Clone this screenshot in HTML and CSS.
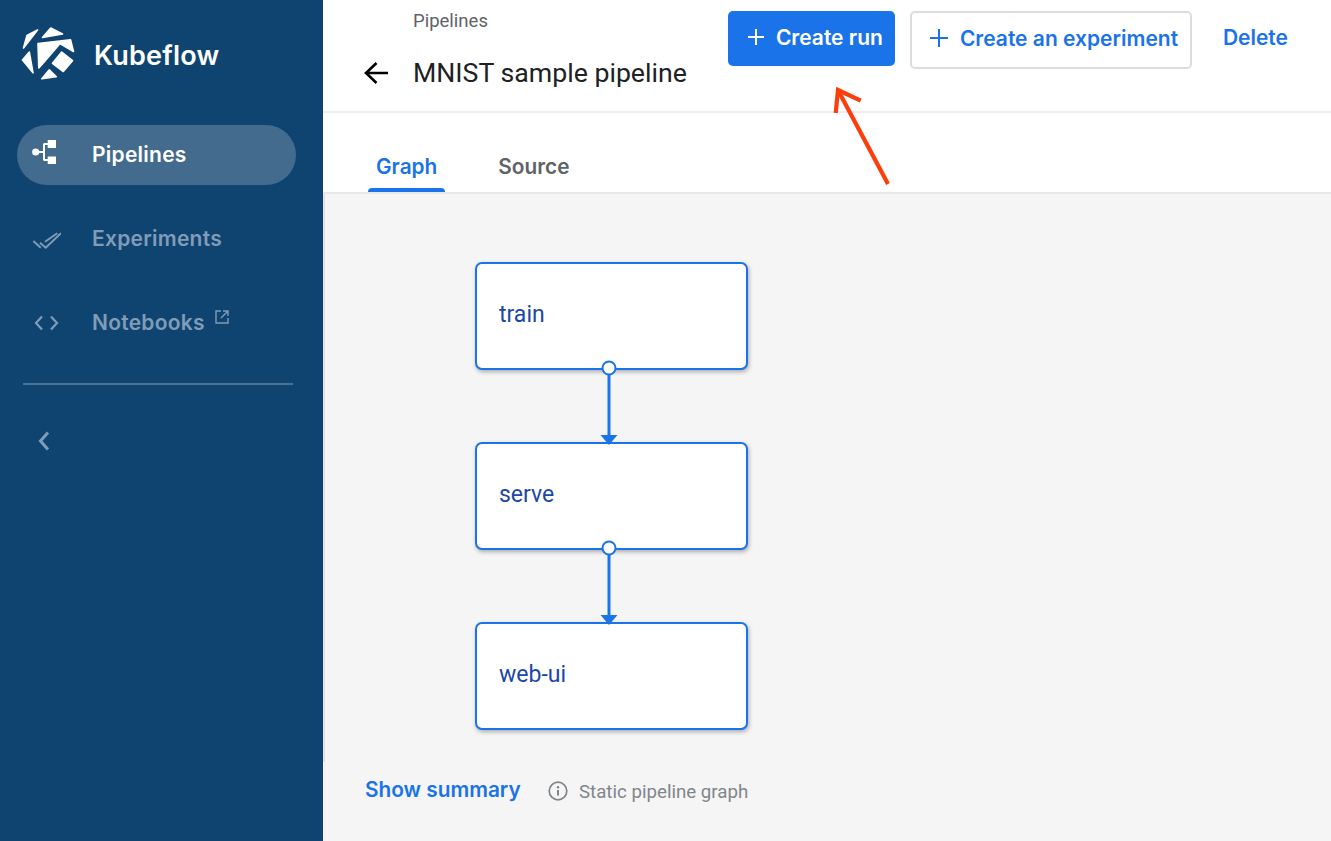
FILE: index.html
```html
<!DOCTYPE html>
<html lang="en">
<head>
<meta charset="UTF-8" />
<title>Kubeflow Pipelines</title>
<link rel="stylesheet" href="styles.css">
</head>
<body>
  <div class="app">
    <nav class="sidebar">
      <div class="brand">
        <svg class="logo" viewBox="0 0 60 60" width="60" height="60">
          <g transform="translate(-21 -24)" fill="#fff" stroke="#fff" stroke-width="1.6" stroke-linejoin="round">
            <polygon points="37.5,30 27,35.5 23.5,48 " />
            <polygon points="50.7,28 42.5,37.5 62.5,34" />
            <polygon points="38,43.5 70.5,39.8 73.5,51.5 60,43.5 45,61 38.8,68" />
            <polygon points="61.7,52 72.5,60.7 63.3,71.5 52.5,63.3" />
            <polygon points="29.3,52 33,72.8 22.5,60" />
            <polygon points="49.3,69.8 56.3,76.7 41.8,78.8" />
          </g>
        </svg>
        <span class="brand-name">Kubeflow</span>
      </div>
      <a class="nav-item active">
        <svg class="nav-icon" viewBox="0 0 32 32" width="32" height="32">
          <circle cx="6.700" cy="13" r="3.600" fill="currentColor" />
          <path d="M10 13h5M15 4.500v17" stroke="currentColor" stroke-width="2" fill="none" />
          <rect x="15" y="4" width="4" height="2" fill="currentColor" />
          <rect x="15" y="20" width="4" height="2" fill="currentColor" />
          <rect x="18.700" y="1" width="8.300" height="8" fill="currentColor" />
          <rect x="18.700" y="17.500" width="8.300" height="7.500" fill="currentColor" />
        </svg>
        <span>Pipelines</span>
      </a>
      <a class="nav-item">
        <svg class="nav-icon" viewBox="0 0 32 32" width="32" height="32">
          <path d="M4.300 18l7.400 6.700M11 19.700l5.700 5L32 10.300M16 18.700l12.300-8.400" stroke="currentColor" stroke-width="1.900" fill="none" />
        </svg>
        <span>Experiments</span>
      </a>
      <a class="nav-item">
        <svg class="nav-icon" viewBox="0 0 32 32" width="32" height="32">
          <path d="M13 9.500L7 16l6 6.500M22 9.500l6 6.500-6 6.500" stroke="currentColor" stroke-width="2.200" fill="none" />
        </svg>
        <span>Notebooks</span>
        <svg class="ext-icon" viewBox="0 0 16 16" width="16" height="16">
          <path d="M7 2H2v12h12V9M9 2h5v5M14 2L7 9" stroke="currentColor" stroke-width="1.400" fill="none" />
        </svg>
      </a>
      <div class="nav-divider"></div>
      <svg class="collapse" viewBox="0 0 16 24" width="16" height="24">
        <path d="M12 3.500L4.500 12l7.500 8.500" stroke="currentColor" stroke-width="3" fill="none" />
      </svg>
    </nav>

    <main class="content">
      <header class="topbar">
        <div class="title-block">
          <div class="crumb">Pipelines</div>
          <div class="title-row">
            <svg class="back" viewBox="0 0 24 24" width="24" height="24">
              <path d="M24 12H2M12.500 2L2 12l10.500 10" stroke="#000" stroke-width="2.600" fill="none" />
            </svg>
            <h1>MNIST sample pipeline</h1>
          </div>
        </div>
        <div class="actions">
          <button class="btn btn-primary">
            <svg viewBox="0 0 18 18" width="18" height="18"><path d="M9 1v16M1 9h16" stroke="currentColor" stroke-width="2" /></svg>
            Create run
          </button>
          <button class="btn btn-outline">
            <svg viewBox="0 0 18 18" width="18" height="18"><path d="M9 0v18M0 9h18" stroke="currentColor" stroke-width="2" /></svg>
            Create an experiment
          </button>
          <button class="btn btn-text">Delete</button>
        </div>
      </header>

      <div class="tabs">
        <div class="tab selected">Graph</div>
        <div class="tab">Source</div>
      </div>

      <section class="graph-area">
        <div class="graph">
          <div class="node">train</div>
          <svg class="edge" viewBox="0 0 20 72" width="20" height="72">
            <path d="M10 4v66" stroke="#1a73e8" stroke-width="3" />
            <path d="M1.500 65h17l-8.500 10z" fill="#1a73e8" />
            <circle cx="10" cy="-2" r="6.500" fill="#fff" stroke="#1a73e8" stroke-width="2" />
          </svg>
          <div class="node">serve</div>
          <svg class="edge" viewBox="0 0 20 72" width="20" height="72">
            <path d="M10 4v66" stroke="#1a73e8" stroke-width="3" />
            <path d="M1.500 65h17l-8.500 10z" fill="#1a73e8" />
            <circle cx="10" cy="-2" r="6.500" fill="#fff" stroke="#1a73e8" stroke-width="2" />
          </svg>
          <div class="node">web-ui</div>
        </div>
        <div class="graph-footer">
          <a class="summary-link">Show summary</a>
          <svg class="info" viewBox="0 0 20 20" width="20" height="20">
            <circle cx="10" cy="10" r="8.800" fill="none" stroke="#80868b" stroke-width="1.700" />
            <path d="M10 9v5.500" stroke="#80868b" stroke-width="2" />
            <circle cx="10" cy="6.200" r="1.200" fill="#80868b" />
          </svg>
          <span class="static-note">Static pipeline graph</span>
        </div>
      </section>
    </main>
  </div>

  <!-- red annotation drawn over the page -->
  <svg class="annotation" viewBox="0 0 60 100" width="60" height="100">
    <path d="M56 96L7 4" stroke="#fc3d0c" stroke-width="4.200" fill="none" />
    <path d="M3.700 25L6 2l22.700 10.700" stroke="#fc3d0c" stroke-width="4.200" fill="none" />
  </svg>
</body>
</html>
```

FILE: styles.css
```css
* {
  box-sizing: border-box;
}
html, body {
  height: 100%;
}
body {
  margin: 0;
  background: #fff;
  font-family: 'Inter', 'Liberation Sans', sans-serif;
  overflow: hidden;
}
.app {
  display: flex;
  height: 841px;
}

/* left nav */
.sidebar {
  width: 323px;
  flex: none;
  background: #0f4471;
  color: #7f9cb8;
  padding: 26px 27px 0 17px;
  display: flex;
  flex-direction: column;
}
.brand {
  display: flex;
  align-items: center;
  gap: 17px;
  height: 56px;
  margin-left: 4px;
  margin-bottom: 43px;
  color: #fff;
}
.logo {
  width: 60px;
  flex: none;
  margin-right: -4px;
}
.brand-name {
  padding-top: 3px;
  font-size: 27px;
  font-weight: 600;
  letter-spacing: 0.2px;
}
.nav-item {
  display: flex;
  align-items: center;
  height: 60px;
  width: 279px;
  margin-bottom: 24px;
  padding-left: 12px;
  border-radius: 30px;
  font-size: 21px;
  font-weight: 600;
  letter-spacing: 0.25px;
}
.nav-item span {
  padding-bottom: 2px;
}
.nav-item.active {
  background: #426b8e;
  color: #fff;
}
.nav-icon {
  flex: none;
  margin-right: 31px;
}
.ext-icon {
  margin: -12px 0 0 9px;
}
.nav-divider {
  height: 2px;
  margin: 6px 3px 0 6px;
  background: #4a7196;
}
.collapse {
  margin: 44px 0 0 19px;
}

/* main column */
.content {
  flex: 1;
  display: flex;
  flex-direction: column;
  min-width: 0;
}
.topbar {
  height: 113px;
  flex: none;
  display: flex;
  justify-content: space-between;
  border-bottom: 2px solid #eeeeee;
  background: #fff;
}
.title-block {
  padding: 11px 0 0 41px;
}
.crumb {
  margin-left: 49px;
  font-family: 'Roboto', sans-serif;
  font-size: 18.500px;
  line-height: 20px;
  color: #5f6368;
}
.title-row {
  display: flex;
  align-items: center;
  gap: 25px;
  margin-top: 22px;
}
.back {
  flex: none;
}
h1 {
  margin: 0;
  font-family: 'Roboto', sans-serif;
  font-size: 26.700px;
  font-weight: 400;
  line-height: 40px;
  color: #202124;
}
.actions {
  display: flex;
  align-items: flex-start;
  padding: 11px 43px 0 0;
}
.btn {
  display: flex;
  align-items: center;
  border: none;
  background: none;
  font-family: inherit;
  font-size: 21px;
  font-weight: 600;
  white-space: nowrap;
  color: #1a73e8;
}
.btn-primary {
  width: 167px;
  height: 55px;
  gap: 11px;
  padding: 0 0 3px 19px;
  border-radius: 5px;
  background: #1a73e8;
  color: #fff;
}
.btn-outline {
  width: 282px;
  height: 58px;
  gap: 12px;
  margin-left: 15px;
  padding: 0 0 4px 18px;
  border: 2px solid #dcdcdc;
  border-radius: 5px;
}
.btn-text {
  height: 52px;
  margin-left: 31px;
  padding: 0;
}
.tabs {
  height: 81px;
  flex: none;
  display: flex;
  gap: 45px;
  padding-left: 45px;
  border-bottom: 2px solid #e8e8e8;
  background: #fff;
}
.tab {
  position: relative;
  padding: 41px 8px 0;
  font-size: 20.800px;
  font-weight: 600;
  color: #5f6368;
}
.tab.selected {
  color: #1a73e8;
}
.tab.selected::after {
  content: '';
  position: absolute;
  left: 0;
  right: 0;
  bottom: 0;
  height: 4px;
  border-radius: 4px 4px 0 0;
  background: #1a73e8;
}

/* graph */
.graph-area {
  flex: 1;
  position: relative;
  background: #f5f5f5;
  padding: 68px 0 0 42px;
}
/* thin grey strip along the nav edge */
.graph-area::before {
  content: '';
  position: absolute;
  left: 0;
  top: 0;
  width: 2px;
  height: 568px;
  background: #e2e2e2;
}
.graph {
  display: flex;
  flex-direction: column;
  width: 273px;
  margin-left: 110px;
}
.node {
  height: 108px;
  display: flex;
  align-items: center;
  padding: 0 0 3px 22px;
  background: #fff;
  border: 2px solid #1a73e8;
  border-radius: 7px;
  box-shadow: 1px 2px 4px rgba(0, 0, 0, 0.3);
  font-family: 'Roboto', sans-serif;
  font-size: 23px;
  color: #1b47a7;
  position: relative;
}
.edge {
  display: block;
  margin-left: 124px;
  overflow: visible;
  position: relative;
  z-index: 1;
}
.graph-footer {
  display: flex;
  align-items: center;
  margin-top: 49px;
}
.summary-link {
  width: 183px;
  margin-top: -4px;
  font-size: 20.800px;
  font-weight: 600;
  color: #1a73e8;
}
.info {
  flex: none;
  margin-right: 11px;
}
.static-note {
  padding-top: 2px;
  font-family: 'Roboto', sans-serif;
  font-size: 18.700px;
  color: #80868b;
}

/* over the page */
.annotation {
  position: absolute;
  left: 832px;
  top: 88px;
  overflow: visible;
}
```
